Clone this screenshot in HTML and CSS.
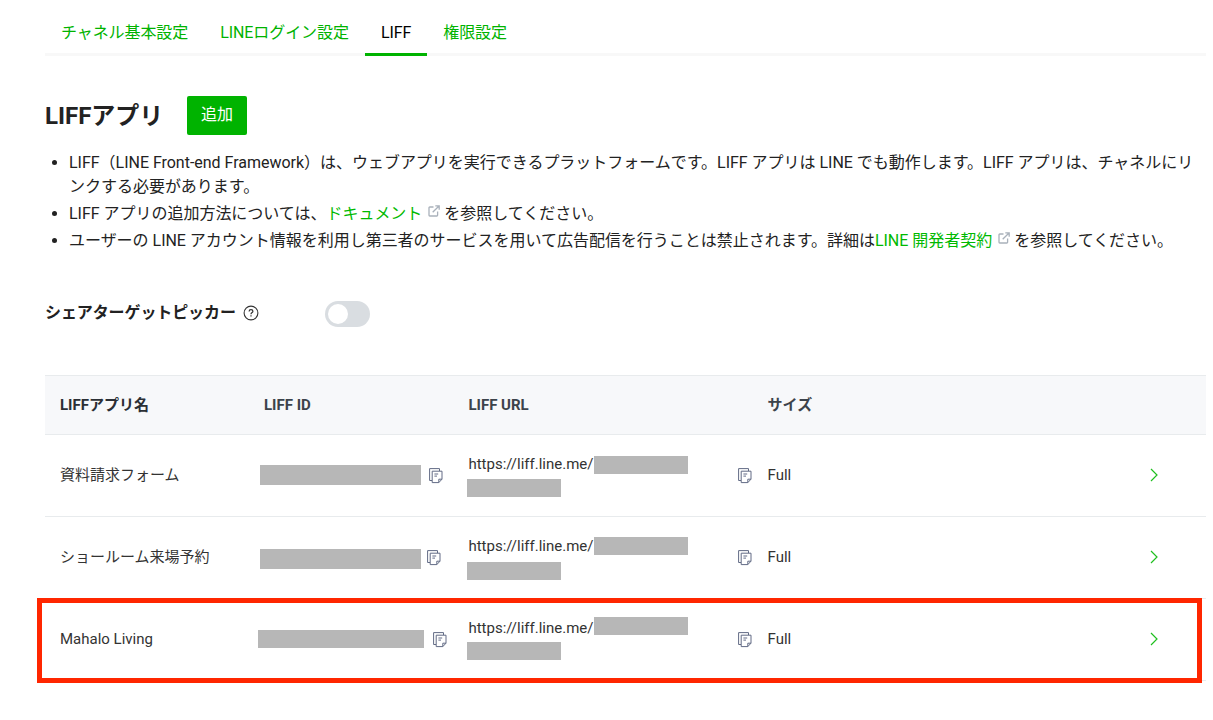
FILE: index.html
```html
<!DOCTYPE html>
<html lang="ja">
<head>
<meta charset="utf-8">
<title>LIFF</title>
<link rel="stylesheet" href="styles.css">
</head>
<body>
<svg class="defs" width="0" height="0">
  <symbol id="copy" viewBox="0 0 14 16"><path d="M3 12.5H.6V.6H10.5V3M3.2 3.2H13V11.2L9.8 14.6H3.2ZM13 11.2H9.8V14.6M5.4 6H9.2M5.4 8.1H8" fill="none" stroke="#626b85" stroke-width="1"/></symbol>
  <symbol id="ext" viewBox="0 0 12 12"><path d="M5.5 2H1.8Q1 2 1 2.8V10.2Q1 11 1.8 11H8.8Q9.6 11 9.6 10.2V6.5M7.3 .8H11.2V4.7M11 1L4.7 7.3" fill="none" stroke="#a9b1bb" stroke-width="1.3"/></symbol>
  <symbol id="arrow" viewBox="0 0 8 14"><path d="M1 1L7 7L1 13" fill="none" stroke="#1fbf1f" stroke-width="1.2"/></symbol>
</svg>
<main class="page">
  <nav class="tabs">
    <a class="tab">チャネル基本設定</a>
    <a class="tab">LINEログイン設定</a>
    <a class="tab active">LIFF</a>
    <a class="tab">権限設定</a>
  </nav>
  <header class="heading">
    <h1>LIFFアプリ</h1>
    <button class="add">追加</button>
  </header>
  <ul class="notes">
    <li>LIFF（LINE Front-end Framework）は、ウェブアプリを実行できるプラットフォームです。LIFF アプリは LINE でも動作します。LIFF アプリは、チャネルにリ<br>ンクする必要があります。</li>
    <li>LIFF アプリの追加方法については、<a>ドキュメント</a><svg class="ext"><use href="#ext"/></svg>を参照してください。</li>
    <li>ユーザーの LINE アカウント情報を利用し第三者のサービスを用いて広告配信を行うことは禁止されます。詳細は<a>LINE 開発者契約</a><svg class="ext"><use href="#ext"/></svg>を参照してください。</li>
  </ul>
  <section class="picker">
    <span class="picker-label">シェアターゲットピッカー</span>
    <svg class="help" viewBox="0 0 16 16"><circle cx="8" cy="8" r="6.9" fill="none" stroke="#333" stroke-width="1.1"/><path d="M6.1 6.5Q6.1 4.7 8 4.7Q9.9 4.7 9.9 6.3Q9.9 7.2 8.8 7.8Q8 8.3 8 9.3M8 10.3V11.6" fill="none" stroke="#333" stroke-width="1.2"/></svg>
    <span class="switch"><span class="knob"></span></span>
  </section>
  <section class="table">
    <div class="row head"><span>LIFFアプリ名</span><span>LIFF ID</span><span>LIFF URL</span><span>サイズ</span><span></span></div>
    <div class="row">
      <span class="text">資料請求フォーム</span>
      <span class="id"><i class="mask"></i><svg class="copy"><use href="#copy"/></svg></span>
      <span class="url"><span class="address">https://liff.line.me/<i class="mask"></i><i class="mask second"></i></span><svg class="copy"><use href="#copy"/></svg></span>
      <span class="text">Full</span><svg class="arrow"><use href="#arrow"/></svg>
    </div>
    <div class="row middle">
      <span class="text">ショールーム来場予約</span>
      <span class="id"><i class="mask"></i><svg class="copy"><use href="#copy"/></svg></span>
      <span class="url"><span class="address">https://liff.line.me/<i class="mask"></i><i class="mask second"></i></span><svg class="copy"><use href="#copy"/></svg></span>
      <span class="text">Full</span><svg class="arrow"><use href="#arrow"/></svg>
    </div>
    <div class="row last">
      <span class="text">Mahalo Living</span>
      <span class="id"><i class="mask"></i><svg class="copy"><use href="#copy"/></svg></span>
      <span class="url"><span class="address">https://liff.line.me/<i class="mask"></i><i class="mask second"></i></span><svg class="copy"><use href="#copy"/></svg></span>
      <span class="text">Full</span><svg class="arrow"><use href="#arrow"/></svg>
      <div class="highlight"></div>
    </div>
  </section>
</main>
</body>
</html>
```
FILE: styles.css
```css
* { box-sizing: border-box; }
body { margin: 0; background: #fff; color: #222; font: 16px/24px Roboto, "Noto Sans CJK JP", sans-serif; }
.defs { display: block; }
.page { width: 1161px; margin-left: 45px; height: 720px; overflow: visible; }
.tabs { display: flex; height: 56px; box-shadow: inset 0 -3px #f8f8f8; }
.tab { padding: 21px 16px 0; color: #00b300; white-space: nowrap; letter-spacing: -0.08px; }
.tab.active { color: #000; border-bottom: 3px solid #00b300; }
.heading { display: flex; align-items: center; margin-top: 40px; height: 39px; }
h1 { margin: 0; width: 142px; font-size: 24px; line-height: 36px; font-weight: 700; white-space: nowrap; }
.add { width: 60px; height: 39px; padding: 0 0 1px; border: 0; border-radius: 2px; background: #00b300; color: #fff; font: inherit; }
.notes { margin: 16px 0 0; padding-left: 24px; white-space: nowrap; letter-spacing: -0.02px; }
.notes li { margin-bottom: 3px; }
.notes a { color: #00b900; }
.ext { width: 12px; height: 12px; margin: 0 4px 0 6px; vertical-align: 2px; }
.picker { display: flex; align-items: center; height: 26px; margin-top: 48px; }
.picker-label { font-weight: 700; width: 198px; padding-bottom: 2px; white-space: nowrap; letter-spacing: -0.1px; }
.help { width: 16px; height: 16px; margin-bottom: 2px; }
.switch { width: 45px; height: 26px; margin-left: 66px; padding: 3px; border-radius: 13px; background: #d9dde1; }
.knob { display: block; width: 20px; height: 20px; border-radius: 50%; background: #fff; }
.table { margin-top: 48px; font-size: 15px; }
.row { display: grid; grid-template-columns: 204px 204.4px 299.2px 382.4px 1fr; align-items: center; height: 82px; padding-left: 15px; border-bottom: 1px solid #e8ebed; position: relative; color: #333; }
.row.head { height: 60px; border-top: 1px solid #e8ebed; background: #f7f8fa; font-weight: 700; color: #3c434b; }
.row.head span:first-child { color: #2b2f35; }
.text { padding-bottom: 2px; }
.mask { display: inline-block; background: #b7b7b7; }
.id { display: flex; align-items: center; }
.id .mask { width: 161px; height: 20px; margin: 0 0 1px -4px; }
.copy { width: 14px; height: 16px; margin-left: 8px; }
.middle .id .copy { margin-left: 6px; }
.middle .id .mask { margin: 3px 0 0 -4px; }
.last .id .mask { width: 166px; height: 18px; margin-left: -6px; }
.last .id .copy { margin-left: 9px; }
.url { display: flex; align-items: center; }
.address { width: 270px; height: 48px; line-height: 24px; white-space: nowrap; }
.url .copy { margin-left: 0; }
.address .mask { width: 94px; height: 18px; margin-left: 1px; vertical-align: -5px; }
.address .mask.second { display: block; margin: 3px 0 0 -1px; }
.middle .address .mask { vertical-align: -4px; }
.last .address .mask { vertical-align: -2px; }
.middle .address .mask.second { margin-top: 4px; }
.last .address .mask.second { margin-top: 2px; }
.arrow { width: 8px; height: 14px; margin-bottom: 2px; }
.highlight { position: absolute; left: -8px; top: -1px; width: 1165px; height: 85px; border: 5px solid #ff2600; }
```
